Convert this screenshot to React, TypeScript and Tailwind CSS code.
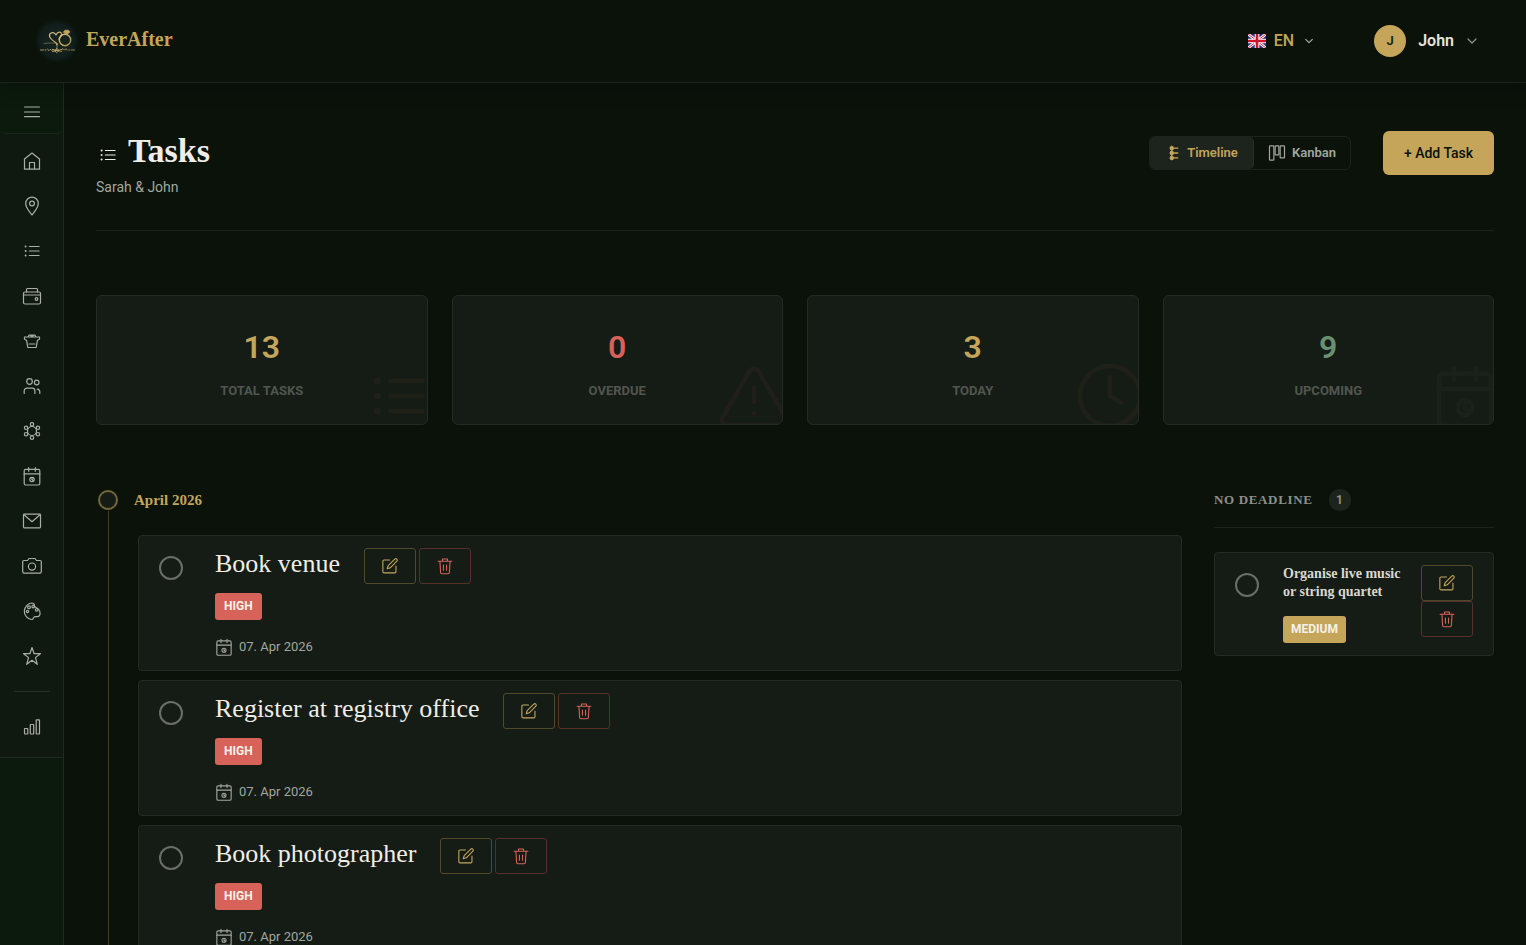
import type { ReactNode } from "react";

type IconName =
  | "menu"
  | "home"
  | "pin"
  | "list"
  | "wallet"
  | "basket"
  | "users"
  | "seating"
  | "calendar"
  | "mail"
  | "camera"
  | "palette"
  | "star"
  | "chart"
  | "edit"
  | "trash"
  | "warning"
  | "clock"
  | "timeline"
  | "kanban"
  | "chevron";

const paths: Record<IconName, ReactNode> = {
  menu: <path d="M4.500 7h15M4.500 12h15M4.500 16.700h15" />,
  home: <path d="M4.500 10 12 4l7.500 6v10.200h-15zM9.500 20v-6.500h5V20" />,
  pin: (
    <>
      <path d="M12 21c-3.500-4.500-6.300-7.500-6.300-11.500a6.300 6.300 0 0 1 12.600 0c0 4-2.800 7-6.300 11.500z" />
      <circle cx="12" cy="9.500" r="2.400" />
    </>
  ),
  list: (
    <>
      <path d="M9.400 7.500h9.700M9.400 12h9.700M9.400 16.500h9.700" />
      <g fill="currentColor" stroke="none">
        <circle cx="5.600" cy="7.500" r="1" />
        <circle cx="5.600" cy="12" r="1" />
        <circle cx="5.600" cy="16.500" r="1" />
      </g>
    </>
  ),
  wallet: (
    <>
      <rect x="3.500" y="8" width="17" height="12" rx="1.500" />
      <path d="M3.500 11h17M6.500 8V5.500a1 1 0 0 1 1-1h9a1 1 0 0 1 1 1V8" />
      <circle cx="16.500" cy="15" r="1.300" />
    </>
  ),
  basket: (
    <path d="M4.500 8h15v2.300l-2 .9-1.300 7.300H7.800l-1.300-7.300-2-.9zM8 8l1-1.800h6L16 8M10.500 6.200 12 8l1.500-1.800M9 15h6" />
  ),
  users: (
    <>
      <circle cx="9.500" cy="7.500" r="2.800" />
      <circle cx="16.700" cy="8.500" r="2.300" />
      <path d="M4.200 19.500v-2.700a2.700 2.700 0 0 1 2.700-2.700h5.300a2.700 2.700 0 0 1 2.700 2.700v2.700M17.300 15.200c1.500.2 2.500 1.200 2.500 2.600v1.700" />
    </>
  ),
  seating: (
    <>
      <circle cx="12" cy="12" r="4.500" />
      <circle cx="12" cy="5.300" r="1.700" />
      <circle cx="12" cy="18.700" r="1.700" />
      <circle cx="6.100" cy="8.800" r="1.700" />
      <circle cx="17.900" cy="8.800" r="1.700" />
      <circle cx="6.100" cy="15.200" r="1.700" />
      <circle cx="17.900" cy="15.200" r="1.700" />
    </>
  ),
  calendar: (
    <>
      <rect x="4.200" y="5.300" width="15.600" height="15.700" rx="1.500" />
      <path d="M4.200 9.900h15.600M8.700 3.700v3.500M15.300 3.700v3.500" />
      <circle cx="12" cy="15.500" r="2.200" />
      <path d="M12 14v1.500l1 1" />
    </>
  ),
  mail: (
    <>
      <rect x="3.500" y="5.200" width="17" height="13.600" rx=".8" />
      <path d="m4 5.700 8 7 8-7" />
    </>
  ),
  camera: (
    <>
      <path d="M4 6.500h3.500L9 4.500h6l1.500 2H20A1.300 1.300 0 0 1 21.300 7.800v10a1.300 1.300 0 0 1-1.300 1.300H4a1.300 1.300 0 0 1-1.300-1.300v-10A1.300 1.300 0 0 1 4 6.500z" />
      <circle cx="12" cy="12.600" r="3.600" />
    </>
  ),
  palette: (
    <>
      <path d="M12 4a8.300 8.300 0 0 0-.5 16.500c1.700.2 1.600-1.200 2.200-2 .6-1 1.600-1 2.900-.8 1.900.2 3.400-1 3.500-3 .1-1.700-.4-3-1.300-4M12 4c2 .2 2.700 1.500 2.300 2.700" />
      <circle cx="7.500" cy="12.500" r="1.200" />
      <circle cx="9" cy="8.300" r="1.400" />
      <circle cx="13.200" cy="7.500" r="1.300" />
      <circle cx="16.700" cy="10.800" r="1.300" />
      <path d="m14 7 4.500 3.300" />
    </>
  ),
  star: <path d="m12 3.500 2.100 6.200h6.300l-5 3.900 1.900 6.700-5.300-4-5.300 4 1.900-6.700-5-3.900h6.300z" />,
  chart: (
    <>
      <rect x="4.500" y="13.500" width="3.300" height="5.500" rx=".5" />
      <rect x="10.300" y="9.500" width="3.400" height="9.500" rx=".5" />
      <rect x="16.200" y="4.800" width="3.300" height="14.200" rx=".5" />
    </>
  ),
  edit: (
    <>
      <path d="M11.500 5.500h-6A1.300 1.300 0 0 0 4.200 6.800v11.400a1.300 1.300 0 0 0 1.300 1.300h11.700a1.300 1.300 0 0 0 1.300-1.300V12" />
      <path d="M17.200 4.500a1.500 1.500 0 0 1 2.300 2.200L12.300 14l-3.300 1 1-3.300z" />
    </>
  ),
  trash: (
    <path d="M4.500 6.800h15M9.300 6.500V4.300h5.400v2.200M6.500 7l.7 12a1.500 1.500 0 0 0 1.500 1.400h6.600a1.500 1.500 0 0 0 1.500-1.400l.7-12M10.300 11v5.500M13.700 11v5.500" />
  ),
  warning: (
    <>
      <path d="M10.600 4.700a1.600 1.600 0 0 1 2.800 0l8 13.600c.7 1.200-.1 2.400-1.400 2.400H4c-1.300 0-2.100-1.200-1.400-2.400z" />
      <path d="M12 9.500v4.200M12 17.200h.01" />
    </>
  ),
  clock: (
    <>
      <circle cx="12" cy="12" r="9" />
      <path d="M12 6.500V12l3.500 2" />
    </>
  ),
  timeline: (
    <>
      <path d="M9 3v18M9 5.500h8M9 12h8M9 18.500h8" />
      <circle cx="9" cy="5.500" r="2" fill="currentColor" />
      <circle cx="9" cy="12" r="2" fill="currentColor" />
      <circle cx="9" cy="18.500" r="2" fill="currentColor" />
    </>
  ),
  kanban: (
    <>
      <rect x="2" y="2.500" width="5.800" height="19" rx="1" />
      <rect x="9.500" y="2.500" width="5" height="12" rx="1" />
      <rect x="16.200" y="2.500" width="5.800" height="16" rx="1" />
    </>
  ),
  chevron: <path d="m4 8 8 8 8-8" />,
};

function Icon({ name, className = "size-6", weight = 1.2 }: { name: IconName; className?: string; weight?: number }) {
  return (
    <svg
      viewBox="0 0 24 24"
      className={`shrink-0 ${className}`}
      fill="none"
      stroke="currentColor"
      strokeWidth={weight}
      strokeLinecap="round"
      strokeLinejoin="round"
      aria-hidden="true"
    >
      {paths[name]}
    </svg>
  );
}

function Logo() {
  return (
    <svg viewBox="0 0 48 48" className="size-12" fill="none" aria-hidden="true">
      <defs>
        <radialGradient id="logo-glow">
          <stop offset="0.5" stopColor="#13211f" />
          <stop offset="0.8" stopColor="#101d1b" />
          <stop offset="1" stopColor="#0a120a" />
        </radialGradient>
        <linearGradient id="logo-gold" x1="0" y1="0" x2="1" y2="1">
          <stop stopColor="#e0cc8e" />
          <stop offset="1" stopColor="#a8873f" />
        </linearGradient>
      </defs>
      <circle cx="25" cy="24" r="22" fill="url(#logo-glow)" />
      <g stroke="url(#logo-gold)" strokeLinecap="round" strokeLinejoin="round">
        <path d="M25.500 27.500c-1-2.500-7.500-4.500-8-8.500-.3-3.500 4.700-4.800 6.500-1 1.500-3.500 5-3.500 5.500-1.300.4 1.700-1.500 3-2.500 5.300" strokeWidth="1.200" />
        <circle cx="33" cy="23" r="5.700" strokeWidth="1.400" />
        <path d="m31.500 15 1.500-1.800h3.500l1.500 1.800-3.200 2.800z" fill="#c4a55a" strokeWidth="0.600" />
        <path d="M12 26.500c5-.5 10-.8 14 .2" strokeWidth="0.600" opacity="0.700" />
        <path d="M24.500 27c1 1.500.8 3 .3 5" strokeWidth="0.900" />
        <path d="M8.500 33h3m1.500 0h1m1.500-.8 1.500 1.500 1.500-1.500 1.500 1.500m9.500-1 1.500-1 1.500 1.500 1.500-1.500 1.500 1.500m1.500-.2h1m1.500 0h3" strokeWidth="1" opacity="0.800" />
        <path d="m23 33.500 2-2 2 2-2 2zM20.500 32.500l9 2M29.500 32.500l-9 2" strokeWidth="0.900" />
      </g>
    </svg>
  );
}

function Flag() {
  return (
    <svg viewBox="0 0 18 14" className="h-3.5 w-[18px]" aria-hidden="true">
      <path fill="#29337a" d="M0 0h18v14H0z" />
      <path stroke="#fff" strokeWidth="2.800" d="m0 0 18 14M18 0 0 14" />
      <path stroke="#d8203f" strokeWidth="1" d="m0 0 18 14M18 0 0 14" />
      <path stroke="#fff" strokeWidth="4.600" d="M9 0v14M0 7h18" />
      <path stroke="#d0142f" strokeWidth="2.600" d="M9 0v14M0 7h18" />
    </svg>
  );
}

const navItems: { icon: IconName; label: string }[] = [
  { icon: "home", label: "Home" },
  { icon: "pin", label: "Venues" },
  { icon: "list", label: "Tasks" },
  { icon: "wallet", label: "Budget" },
  { icon: "basket", label: "Vendors" },
  { icon: "users", label: "Guests" },
  { icon: "seating", label: "Seating" },
  { icon: "calendar", label: "Schedule" },
  { icon: "mail", label: "Invitations" },
  { icon: "camera", label: "Photos" },
  { icon: "palette", label: "Theme" },
  { icon: "star", label: "Favourites" },
];

const stats: { value: number; label: string; icon: IconName; color: string; ghost: string }[] = [
  { value: 13, label: "TOTAL TASKS", icon: "list", color: "text-[#c4a55a]", ghost: "text-[#1f2119]" },
  { value: 0, label: "OVERDUE", icon: "warning", color: "text-[#d6625a]", ghost: "text-[#201f1a]" },
  { value: 3, label: "TODAY", icon: "clock", color: "text-[#c4a55a]", ghost: "text-[#1f2119]" },
  { value: 9, label: "UPCOMING", icon: "calendar", color: "text-[#6b8f71]", ghost: "text-[#1a211b]" },
];

const tasks = ["Book venue", "Register at registry office", "Book photographer"];

function Header() {
  return (
    <header className="relative z-10 flex h-[83px] items-center justify-between border-b border-[#1b231c] bg-[#0a120a] pr-12 pl-8 shadow-[0_4px_20px_rgba(0,0,0,0.3)]">
      <a href="#home" className="flex items-center gap-1.5 text-[#c4a55a]">
        <Logo />
        <span className="pb-1 font-['Liberation_Serif',serif] text-[20px] leading-8 font-bold">EverAfter</span>
      </a>
      <div className="flex items-center gap-15">
        <button type="button" className="flex items-center gap-2 text-base font-medium text-[#c4a55a]">
          <Flag />
          EN
          <Icon name="chevron" className="ml-0.5 size-2.5 text-[#b8b6ae]" weight={2.5} />
        </button>
        <button type="button" className="flex items-center gap-3 text-base font-semibold text-[#e6e3dc]">
          <span className="grid size-8 place-items-center rounded-full bg-[#c4a55a] text-[13px] text-[#0d2818]">J</span>
          John
          <Icon name="chevron" className="size-3 text-[#8b8f88]" weight={2.5} />
        </button>
      </div>
    </header>
  );
}

function Sidebar() {
  return (
    <aside className="w-16 shrink-0 border-r border-[#1f2a21] bg-[#0b1a0d] text-[#aaaea6]">
      <div className="flex h-[51px] items-center justify-center rounded-b-md border-b border-[#17251a] pt-2">
        <button type="button" aria-label="Toggle menu">
          <Icon name="menu" />
        </button>
      </div>
      <nav className="flex flex-col items-center border-b border-[#1f2a21] bg-[#101910] pt-1 pb-2">
        {navItems.map((item) => (
          <a key={item.label} href={`#${item.label.toLowerCase()}`} aria-label={item.label} className="grid h-[45px] w-full place-items-center">
            <Icon name={item.icon} />
          </a>
        ))}
        <hr className="my-[13px] w-9 border-[#253027]" />
        <a href="#reports" aria-label="Reports" className="grid h-11 w-full place-items-center">
          <Icon name="chart" />
        </a>
      </nav>
    </aside>
  );
}

function TaskActions({ stacked = false }: { stacked?: boolean }) {
  return (
    <div className={stacked ? "flex flex-col" : "flex gap-[3px]"}>
      <button type="button" aria-label="Edit task" className="grid h-9 w-13 place-items-center rounded-[3px] border border-[#50492b] text-[#c4a55a]">
        <Icon name="edit" className="size-[22px]" />
      </button>
      <button type="button" aria-label="Delete task" className="grid h-9 w-13 place-items-center rounded-[3px] border border-[#56302b] text-[#d6625a]">
        <Icon name="trash" className="size-[22px]" />
      </button>
    </div>
  );
}

function TaskCheckbox({ label }: { label: string }) {
  return (
    <input
      type="checkbox"
      aria-label={`Complete ${label}`}
      className="m-0 mt-5 size-6 shrink-0 appearance-none rounded-full border-2 border-[#6a6e69] checked:bg-[#6b8f71]"
    />
  );
}

function TaskCard({ title }: { title: string }) {
  return (
    <article className="flex h-[136px] gap-8 rounded-[4px] border border-[#232b24] bg-[#151c16] pl-5">
      <TaskCheckbox label={title} />
      <div className="pt-3">
        <div className="flex h-9 items-start gap-6">
          <h3 className="font-['Liberation_Serif',serif] text-[26px] leading-8 font-medium text-[#f0ede6]">{title}</h3>
          <TaskActions />
        </div>
        <span className="mt-[9px] block w-fit rounded-[3px] bg-[#d6625a] px-[9px] text-xs leading-[27px] font-bold text-[#f5f1ea]">HIGH</span>
        <p className="mt-4 -ml-0.5 flex items-center gap-1 text-[13px] text-[#a3a69f]">
          <Icon name="calendar" className="size-[22px]" />
          07. Apr 2026
        </p>
      </div>
    </article>
  );
}

export default function App() {
  return (
    <div className="flex h-screen flex-col overflow-hidden bg-[#0a120a] font-['Roboto',sans-serif] text-[#f0ede6]">
      <Header />
      <div className="flex min-h-0 flex-1">
        <Sidebar />
        <main className="min-w-0 flex-1 overflow-hidden px-8 pt-12">
          <div className="flex items-start justify-between border-b border-[#1b231c] pb-[31px]">
            <div>
              <h1 className="flex items-center gap-2 font-['Liberation_Serif',serif] text-[34px] leading-10 font-bold">
                <Icon name="list" className="mt-2 size-6" />
                Tasks
              </h1>
              <p className="mt-1 text-sm leading-6 text-[#a3a69f]">Sarah &amp; John</p>
            </div>
            <div className="flex items-center gap-8">
              <div className="flex h-[34px] rounded-md border border-[#1b231c] text-[13px] font-semibold">
                <button type="button" className="flex w-[104px] items-center justify-center gap-1 rounded-[5px] border-r border-[#273028] bg-[#1d241e] text-[#c4a55a]">
                  <Icon name="timeline" className="size-[18px]" weight={1.8} />
                  Timeline
                </button>
                <button type="button" className="flex w-24 items-center justify-center gap-1.5 text-[#a3a69f]">
                  <Icon name="kanban" className="size-[18px]" weight={1.6} />
                  Kanban
                </button>
              </div>
              <button type="button" className="h-11 w-[111px] rounded-md bg-[#c4a55a] text-sm font-medium text-[#0a120a]">
                + Add Task
              </button>
            </div>
          </div>

          <section className="mt-16 grid grid-cols-4 gap-6" aria-label="Task summary">
            {stats.map((stat) => (
              <div key={stat.label} className="relative h-[130px] overflow-hidden rounded-md border border-[#232b24] bg-[#151c16] pt-[31px] text-center">
                <div className={`text-[32px] leading-10 font-semibold ${stat.color}`}>{stat.value}</div>
                <div className="mt-3.5 text-[13px] leading-5 font-bold text-[#50564f]">{stat.label}</div>
                <Icon name={stat.icon} className={`absolute -right-3 -bottom-3 size-20 ${stat.ghost}`} weight={1.4} />
              </div>
            ))}
          </section>

          <div className="mt-16 flex gap-8">
            <section className="min-w-0 flex-1">
              <h2 className="flex h-[22px] items-center gap-4 pl-0.5 font-['Liberation_Serif',serif] text-[15px] font-bold text-[#c4a55a]">
                <span className="size-5 rounded-full border-2 border-[#75673b] bg-[#151c16]" />
                April 2026
              </h2>
              <div className="ml-3 border-l border-[#443e25] pt-6 pl-[29px]">
                <div className="flex flex-col gap-[9px]">
                  {tasks.map((title) => (
                    <TaskCard key={title} title={title} />
                  ))}
                </div>
              </div>
            </section>

            <aside className="w-70 shrink-0">
              <h2 className="flex items-start gap-4 border-b border-[#1b231c] pb-4 font-['Liberation_Serif',serif] text-[13px] leading-[22px] font-bold tracking-wider text-[#8c9089]">
                NO DEADLINE
                <span className="grid size-[22px] place-items-center rounded-full bg-[#1d241e] font-['Roboto',sans-serif] text-xs tracking-normal">1</span>
              </h2>
              <article className="mt-6 flex h-26 rounded-[4px] border border-[#232b24] bg-[#151c16] px-5">
                <TaskCheckbox label="Organise live music or string quartet" />
                <div className="min-w-0 flex-1 pt-3 pr-4 pl-6">
                  <h3 className="font-['Liberation_Serif',serif] text-sm leading-[18px] font-bold text-[#d9d7d0]">
                    Organise live music or string quartet
                  </h3>
                  <span className="mt-[15px] block w-fit rounded-[3px] bg-[#c4a55a] px-2 text-xs leading-[27px] font-bold text-[#f5f1ea]">MEDIUM</span>
                </div>
                <div className="pt-3">
                  <TaskActions stacked />
                </div>
              </article>
            </aside>
          </div>
        </main>
      </div>
    </div>
  );
}
